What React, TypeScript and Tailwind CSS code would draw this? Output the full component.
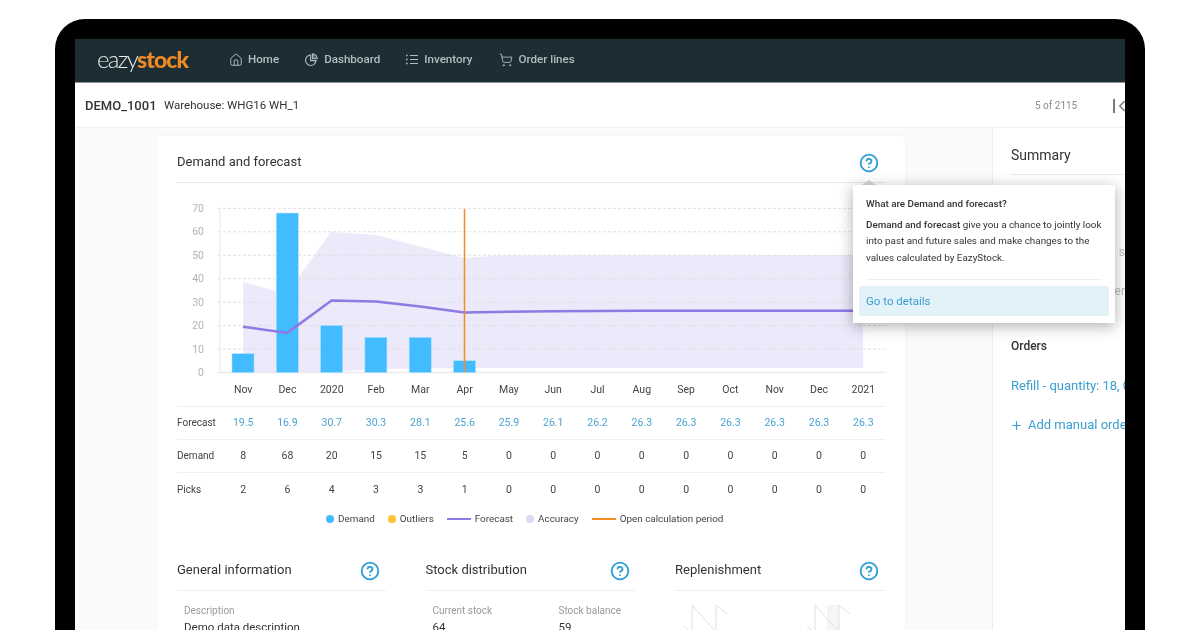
import { CircleHelp, House, ShoppingCart, Plus, ChevronLeft } from "lucide-react";

const months = ["Nov", "Dec", "2020", "Feb", "Mar", "Apr", "May", "Jun", "Jul", "Aug", "Sep", "Oct", "Nov", "Dec", "2021"];
const forecast = ["19.5", "16.9", "30.7", "30.3", "28.1", "25.6", "25.9", "26.1", "26.2", "26.3", "26.3", "26.3", "26.3", "26.3", "26.3"];
const demand = ["8", "68", "20", "15", "15", "5", "0", "0", "0", "0", "0", "0", "0", "0", "0"];
const picks = ["2", "6", "4", "3", "3", "1", "0", "0", "0", "0", "0", "0", "0", "0", "0"];
const cx = (i: number) => 243 + i * 44.3;
const yOf = (v: number) => 372.5 - v * 2.345;

function Help() {
  return <CircleHelp size={20} strokeWidth={2.25} className="text-[#2f9fd2] shrink-0" />;
}

function PieIcon() {
  return (
    <svg width={13} height={13} viewBox="0 0 14 14" fill="none" stroke="currentColor" strokeWidth={1.2} className="shrink-0">
      <path d="M6 2.2 A5.6 5.6 0 1 0 11.8 8.2 H6 Z" />
      <path d="M8 1 A5.2 5.2 0 0 1 13.2 6.2 H8 Z" />
      <path d="M8 3 H11 M8 4.6 H12.4" strokeWidth={0.8} />
    </svg>
  );
}

function ListIcon() {
  return (
    <svg width={12} height={11} viewBox="0 0 12 11" fill="none" stroke="currentColor" className="shrink-0">
      <path d="M0 1.5 H1.6 M0 5.5 H1.6 M0 9.5 H1.6" strokeWidth={1.6} />
      <path d="M4 1.5 H12 M4 5.5 H12 M4 9.5 H12" strokeWidth={1} />
    </svg>
  );
}

function Chart() {
  const ticks = [0, 10, 20, 30, 40, 50, 60, 70];
  const line = forecast.map((v, i) => `${cx(i)},${yOf(parseFloat(v))}`).join(" ");
  return (
    <svg width={708} height={190} viewBox="177 183 708 190" className="block overflow-visible" style={{ fontFamily: "Roboto, sans-serif" }}>
      <polygon
        fill="#ebe9fa"
        points="243,282 276,291 276,307 298,278 331,232 376,235 464,258 500,255.5 863,255 863,368 500,368 464,368 376,369 331,372 243,372"
      />
      {ticks.map((t) => (
        <g key={t}>
          {t > 0 && <line x1={218} x2={885} y1={yOf(t)} y2={yOf(t)} stroke="#e0e0e0" strokeWidth={1} strokeDasharray="3 2" />}
          <text x={204} y={yOf(t) + 3.5} textAnchor="end" fontSize={10.5} fill="#b3b3b3">{t}</text>
        </g>
      ))}
      <line x1={220} x2={220} y1={208} y2={372} stroke="#e8e8e8" />
      <line x1={218} x2={885} y1={372.5} y2={372.5} stroke="#ebebeb" strokeWidth={1.5} />
      {demand.slice(0, 6).map((d, i) => {
        const v = parseFloat(d);
        return <rect key={i} x={cx(i) - 11} y={yOf(v)} width={22} height={372.5 - yOf(v)} fill="#42bcff" stroke="#a5e0ff" strokeWidth={0.5} />;
      })}
      <polyline points={line} fill="none" stroke="#8f79e2" strokeWidth={2.5} />
      <line x1={464.5} x2={464.5} y1={209} y2={372.5} stroke="#f68b1f" strokeWidth={1.5} />
    </svg>
  );
}

function Row({ label, values, blue, border = true }: { label: string; values: string[]; blue?: boolean; border?: boolean }) {
  return (
    <div className={`grid grid-cols-[44px_repeat(15,44.3px)] items-center h-[33px] text-[10.5px] ${border ? "border-b border-[#efefef]" : ""}`}>
      <div className="text-[#444] text-[10px] -mt-[1px]">{label}</div>
      {values.map((v, i) => (
        <div key={i} className={`text-center ${blue ? "text-[#4aa3d0]" : "text-[#444]"}`}>{v}</div>
      ))}
    </div>
  );
}

function Dot({ color, label }: { color: string; label: string }) {
  return (
    <div className="flex items-center gap-[4px]">
      <span className={`w-[8px] h-[8px] rounded-full ${color}`} />
      <span>{label}</span>
    </div>
  );
}

function LegendLine({ color, label }: { color: string; label: string }) {
  return (
    <div className="flex items-center gap-[4px]">
      <span className={`w-[24px] h-[2px] ${color}`} />
      <span>{label}</span>
    </div>
  );
}

function SectionHead({ title }: { title: string }) {
  return (
    <div className="flex items-center justify-between h-[41px] border-b border-[#efefef] pr-[6px] text-[13px] text-[#333]">
      <span className="-mt-[1px]">{title}</span>
      <span className="mt-[1px]"><Help /></span>
    </div>
  );
}

function Field({ label, value }: { label: string; value: string }) {
  return (
    <div>
      <div className="text-[10px] leading-[14px] text-[#9a9a9a]">{label}</div>
      <div className="text-[11.5px] leading-[18px] text-[#333]">{value}</div>
    </div>
  );
}

function Saw({ shaded }: { shaded?: boolean }) {
  return (
    <svg width={44} height={26} viewBox="684 605 44 26" className="block shrink-0">
      {shaded && <rect x={704} y={605} width={12} height={26} fill="#f5f5f5" />}
      <path d="M684 626 L692 633 M692 633 L692 605 L715 631 M716 631 L716 605 L727 614" fill="none" stroke="#e0e0e0" strokeWidth={1} />
    </svg>
  );
}

export default function App() {
  return (
    <div className="w-[1200px] h-[630px] bg-white overflow-hidden" style={{ fontFamily: "Roboto, sans-serif" }}>
      <div className="ml-[55px] mt-[19px] w-[1090px] h-[611px] bg-black rounded-t-[30px] pt-[20px] px-[20px] absolute">
        <div className="relative w-[1050px] h-[591px] bg-white overflow-hidden flex flex-col whitespace-nowrap blur-[0.35px]">
          {/* Nav */}
          <div className="h-[44px] shrink-0 bg-[#1c2d33] border-b border-[#8b9599] flex items-center pl-[22px] text-[11.6px] font-medium text-[#b4bec2]">
            <div className="w-[132px] shrink-0 leading-none -mt-[4px]" style={{ fontFamily: "Lato, sans-serif" }}>
              <span className="text-[24px] font-light text-[#e6ebec] tracking-[-1.7px]">eazy</span>
              <span className="text-[23px] font-black text-[#f08a24] tracking-[-0.9px]">stock</span>
            </div>
            <div className="flex items-center gap-[5px] mr-[26px] -mt-[1px]"><House size={14} strokeWidth={1.6} /><span>Home</span></div>
            <div className="flex items-center gap-[6px] mr-[26px] -mt-[1px]"><PieIcon /><span>Dashboard</span></div>
            <div className="flex items-center gap-[6px] mr-[26px] -mt-[1px]"><ListIcon /><span>Inventory</span></div>
            <div className="flex items-center gap-[6px] -mt-[1px]"><ShoppingCart size={14} strokeWidth={1.5} /><span>Order lines</span></div>
          </div>

          {/* Sub header */}
          <div className="h-[45px] shrink-0 border-b border-[#f1f1f1] flex items-center pl-[10px] pt-[1px] text-[#333]">
            <span className="text-[13px] font-medium w-[79px] shrink-0">DEMO_1001</span>
            <span className="text-[11.5px] w-[134px] shrink-0">Warehouse: WHG16 WH_1</span>
            <span className="ml-[737px] w-[41px] shrink-0 text-[10px] text-[#8a8a8a]">5 of 2115</span>
            <div className="ml-[37px] flex items-center text-[#7a7a7a] shrink-0">
              <span className="w-[2px] h-[14px] bg-[#7a7a7a] shrink-0" />
              <ChevronLeft size={18} strokeWidth={2} className="-ml-[2px] shrink-0" />
            </div>
          </div>

          {/* Body */}
          <div className="flex flex-1 min-h-0">
            <div className="w-[917px] shrink-0 bg-[#fafafa] pl-[82px] pt-[8px]">
              <div className="w-[748px] bg-white rounded-t-[3px] shadow-[0_0_3px_rgba(0,0,0,0.05)] px-[20px]">
                <div className="h-[47px] border-b border-[#e9e9e9] flex items-center justify-between pr-[6px] pt-[5px] text-[13px] text-[#333]">
                  <span>Demand and forecast</span>
                  <span className="mt-[3px]"><Help /></span>
                </div>
                <Chart />
                <div className="grid grid-cols-[44px_repeat(15,44.3px)] items-center h-[34px] text-[10.5px] text-[#444] border-b border-[#efefef]">
                  <div />
                  {months.map((m, i) => <div key={i} className="text-center">{m}</div>)}
                </div>
                <Row label="Forecast" values={forecast} blue />
                <Row label="Demand" values={demand} />
                <Row label="Picks" values={picks} border={false} />
                <div className="flex items-center gap-[13px] pl-[149px] h-[28px] text-[9.9px] text-[#444] -mt-[1px]">
                  <Dot color="bg-[#42bcff]" label="Demand" />
                  <Dot color="bg-[#fdc230]" label="Outliers" />
                  <LegendLine color="bg-[#8f79e2]" label="Forecast" />
                  <Dot color="bg-[#dcd8f5]" label="Accuracy" />
                  <LegendLine color="bg-[#f68b1f]" label="Open calculation period" />
                </div>
                <div className="grid grid-cols-[209px_210px_210px] gap-x-[39.5px] mt-[17px]">
                  <div>
                    <SectionHead title="General information" />
                    <div className="pl-[7px] pt-[13px]"><Field label="Description" value="Demo data description" /></div>
                  </div>
                  <div>
                    <SectionHead title="Stock distribution" />
                    <div className="pl-[7px] pt-[13px] flex">
                      <div className="w-[126px]"><Field label="Current stock" value="64" /></div>
                      <Field label="Stock balance" value="59" />
                    </div>
                  </div>
                  <div>
                    <SectionHead title="Replenishment" />
                    <div className="pl-[9px] pt-[14px] flex gap-[79px]">
                      <Saw />
                      <Saw shaded />
                    </div>
                  </div>
                </div>
              </div>
            </div>

            {/* Summary */}
            <div className="flex-1 min-w-0 bg-white border-l border-[#ececec] pl-[18px] overflow-hidden">
              <div className="h-[47px] border-b border-[#e9e9e9] pt-[18px] text-[14px] leading-[18px] text-[#333]">Summary</div>
              <div className="h-[69px]" />
              <div className="text-right text-[12px] leading-[16px] text-[#bbb]">s</div>
              <div className="h-[23px]" />
              <div className="text-right text-[12px] leading-[16px] text-[#bbb]">er</div>
              <div className="h-[39px]" />
              <div className="text-[12px] leading-[16px] font-medium text-[#333]">Orders</div>
              <div className="mt-[23px] text-[13px] leading-[18px] text-[#3a9fd0]">Refill - quantity: 18, 06/04/2020</div>
              <div className="mt-[21px] flex items-center gap-[5px] text-[13px] leading-[18px] text-[#3a9fd0]">
                <Plus size={13} strokeWidth={2.25} className="shrink-0 -ml-[1px]" />
                <span>Add manual order</span>
              </div>
            </div>
          </div>

          {/* Popover */}
          <div className="absolute left-[787px] top-[141px] w-0 h-0 border-x-[7px] border-x-transparent border-b-[5px] border-b-[#d8d8d8]" />
          <div className="absolute left-[778px] top-[146px] w-[262px] h-[138px] bg-white shadow-[0_3px_14px_rgba(0,0,0,0.32)] px-[6px] pt-[12px] text-[9.85px] text-[#333]">
            <div className="px-[7px] font-medium leading-[14px]">What are Demand and forecast?</div>
            <div className="px-[7px] mt-[6px] leading-[16.4px]">
              <span className="font-medium">Demand and forecast</span> give you a chance to jointly look<br />
              into past and future sales and make changes to the<br />
              values calculated by EazyStock.
            </div>
            <div className="mx-[7px] mt-[13px] border-t border-[#eeeeee]" />
            <div className="mt-[6px] h-[30px] rounded-[2px] bg-[#e3f1f8] flex items-center px-[7px] text-[11.5px] text-[#3a9fd0]">Go to details</div>
          </div>
        </div>
      </div>
    </div>
  );
}
